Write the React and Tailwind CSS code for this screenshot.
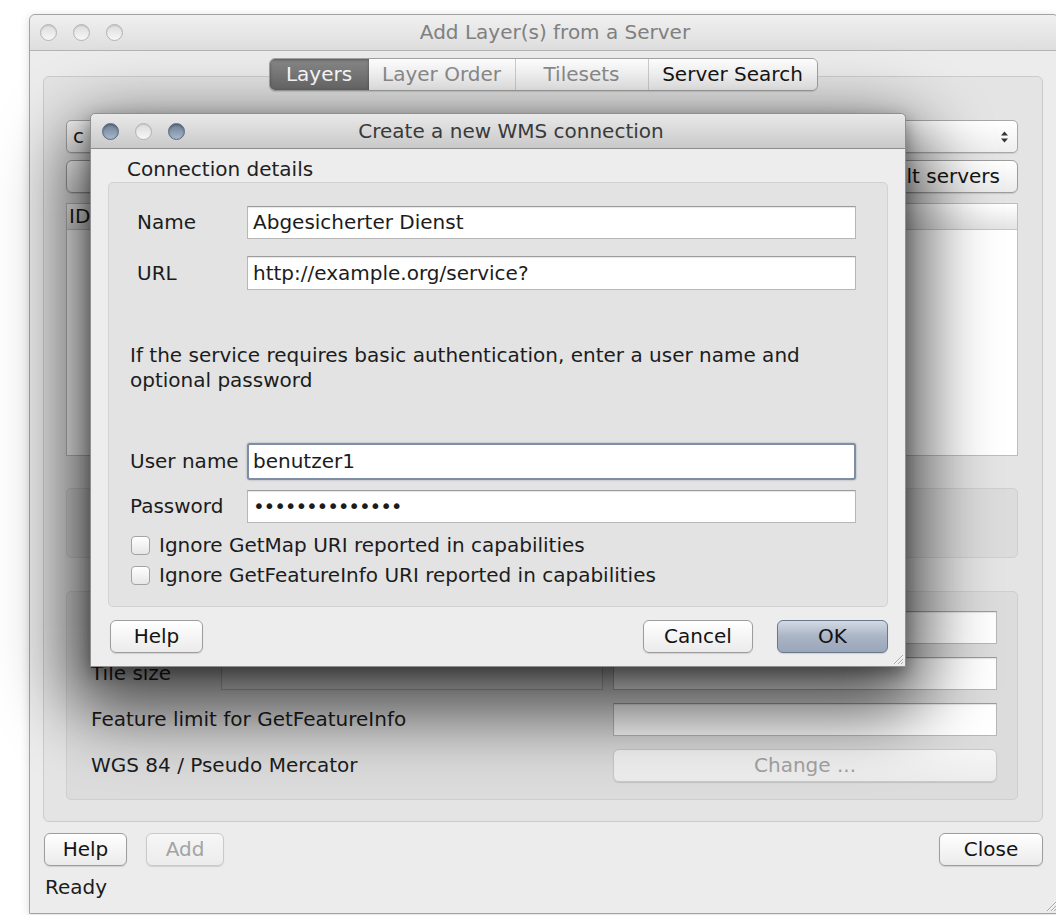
import React from "react";

const FONT = "font-['DejaVu_Sans','Liberation_Sans',sans-serif]";

function Light({ graphite }) {
  return graphite ? (
    <span className="w-[17px] h-[17px] rounded-full border border-[#5a6a80] bg-linear-to-b from-[#6d7f96] to-[#a9b8ca] shadow-[inset_0_1px_2px_rgba(0,0,0,0.35)]" />
  ) : (
    <span className="w-[17px] h-[17px] rounded-full border border-[#b4b4b4] bg-linear-to-b from-[#dcdcdc] to-[#f7f7f7] shadow-[inset_0_1px_1px_rgba(0,0,0,0.12)]" />
  );
}

function Grip() {
  return (
    <svg width="13" height="13" viewBox="0 0 13 13" className="absolute right-[1px] bottom-[1px]">
      <path d="M12 3 L3 12 M12 7 L7 12 M12 10 L10 12" stroke="#a6a6a6" strokeWidth="1" />
      <path d="M12 4 L4 12 M12 8 L8 12" stroke="#fbfbfb" strokeWidth="1" />
    </svg>
  );
}

function Button({ children, className = "", kind = "normal" }) {
  const look =
    kind === "primary"
      ? "border-[#6b788c] bg-linear-to-b from-[#d3dae4] via-[#a9b4c5] to-[#9aa7ba] text-[#111]"
      : kind === "disabled"
      ? "border-[#c9c9c9] bg-linear-to-b from-[#f6f6f6] to-[#ececec] text-[#a3a3a3]"
      : "border-[#9d9d9d] bg-linear-to-b from-white to-[#ebebeb] text-[#141414]";
  return (
    <div
      className={`h-[33px] shrink-0 rounded-[6px] border flex items-center justify-center shadow-[0_1px_1px_rgba(0,0,0,0.12)] ${look} ${className}`}
    >
      {children}
    </div>
  );
}

function Field({ children, className = "", disabled }) {
  return (
    <div
      className={`h-[33px] border border-[#b7b7b7] border-t-[#9c9c9c] flex items-center px-[5px] shadow-[inset_0_1px_1px_rgba(0,0,0,0.1)] ${
        disabled ? "bg-[#e2e2e2]" : "bg-white"
      } ${className}`}
    >
      {children}
    </div>
  );
}

function CheckRow({ label, className = "" }) {
  return (
    <div className={`flex items-center gap-[9px] pl-[22px] h-[23px] ${className}`}>
      <span className="w-[19px] h-[19px] rounded-[4px] border border-[#a3a3a3] bg-linear-to-b from-white to-[#e6e6e6]" />
      <span>{label}</span>
    </div>
  );
}

const tabs = [
  { label: "Layers", w: "w-[99px]", on: true },
  { label: "Layer Order", w: "w-[146px]" },
  { label: "Tilesets", w: "w-[133px]" },
  { label: "Server Search", w: "w-[169px]", dark: true },
];

function MainWindow() {
  return (
    <div className="absolute left-[29px] top-[14px] w-[1030px] h-[900px] rounded-t-[6px] border border-[#a3a3a3] bg-[#ececec] flex flex-col shadow-[0_2px_10px_rgba(0,0,0,0.15)]">
      {/* title bar */}
      <div className="relative h-[36px] shrink-0 flex items-center gap-[16px] pl-[10px] rounded-t-[6px] border-b border-[#b3b3b3] bg-linear-to-b from-[#f0f0f0] to-[#dedede]">
        <Light />
        <Light />
        <Light />
        <div className="absolute inset-0 flex items-center justify-center pl-[22px] text-[#808080]">
          Add Layer(s) from a Server
        </div>
      </div>

      <div className="flex-1 flex flex-col pl-[13px] pr-[15px]">
        {/* tab switcher */}
        <div className="mt-[7px] flex justify-center relative">
          <div className="h-[33px] flex rounded-[6px] border border-[#a2a2a2] overflow-hidden shadow-[0_1px_1px_rgba(0,0,0,0.12)]">
            {tabs.map((t, i) => (
              <div
                key={t.label}
                className={`${t.w} flex items-center justify-center ${
                  i > 0 && !tabs[i - 1].on ? "border-l border-[#cdcdcd]" : ""
                } ${
                  t.on
                    ? "bg-linear-to-b from-[#888888] to-[#6c6c6c] text-white shadow-[inset_0_1px_3px_rgba(0,0,0,0.35)]"
                    : "bg-linear-to-b from-white to-[#eeeeee] " + (t.dark ? "text-[#151515]" : "text-[#8c8c8c]")
                }`}
              >
                {t.label}
              </div>
            ))}
          </div>
        </div>

        {/* tab page */}
        <div className="-mt-[15px] h-[746px] shrink-0 rounded-[6px] border border-[#cbcbcb] bg-[#e4e4e4] pt-[43px] pl-[22px] pr-[24px] flex flex-col">
          <div className="h-[33px] rounded-[5px] border border-[#a8a8a8] bg-linear-to-b from-white to-[#efefef] flex items-center pl-[6px] pr-[8px] shadow-[0_1px_1px_rgba(0,0,0,0.1)]">
            <span className="flex-1">c</span>
            <svg width="9" height="14" viewBox="0 0 9 14">
              <path d="M1 5.5 L4.5 1.5 L8 5.5 Z M1 8.5 L4.5 12.5 L8 8.5 Z" fill="#333" />
            </svg>
          </div>

          {/* server buttons; only the last one shows beside the dialog */}
          <div className="mt-[7px] flex gap-[6px]">
            <Button className="w-[120px] h-[32px]" />
            <Button className="w-[80px] h-[32px]" />
            <Button className="w-[80px] h-[32px]" />
            <Button className="ml-auto w-[232px] h-[32px] justify-end pr-[17px]">Add default servers</Button>
          </div>

          <div className="mt-[10px] h-[253px] border border-[#bdbdbd] bg-white flex flex-col">
            <div className="h-[26px] flex items-center border-b border-[#c6c6c6] bg-linear-to-b from-white to-[#e3e3e3]">
              <span className="pl-[2px]">ID</span>
            </div>
          </div>

          <div className="mt-[32px] h-[70px] rounded-[5px] border border-[#cfcfcf] bg-[#dcdcdc]" />

          <div className="mt-[33px] h-[209px] rounded-[5px] border border-[#cfcfcf] bg-[#dcdcdc] pt-[19px] pl-[24px] pr-[20px] flex flex-col gap-[13px]">
            <div className="h-[33px] flex items-center">
              <Field className="ml-auto w-[384px]" />
            </div>
            <div className="h-[33px] flex items-center">
              <span className="w-[130px]">Tile size</span>
              <Field disabled className="w-[382px]" />
              <Field className="ml-auto w-[384px]" />
            </div>
            <div className="h-[33px] flex items-center">
              <span className="flex-1">Feature limit for GetFeatureInfo</span>
              <Field className="w-[384px]" />
            </div>
            <div className="h-[33px] flex items-center">
              <span className="flex-1">WGS 84 / Pseudo Mercator</span>
              <Button kind="disabled" className="w-[384px] h-[32px] rounded-[5px]">
                Change ...
              </Button>
            </div>
          </div>
        </div>

        <div className="mt-[11px] flex items-center">
          <Button className="ml-[1px] w-[83px]">Help</Button>
          <Button kind="disabled" className="ml-[19px] w-[78px]">
            Add
          </Button>
          <Button className="ml-auto w-[104px]">Close</Button>
        </div>
        <div className="mt-[10px] pl-[2px] leading-[23px]">Ready</div>
      </div>
      <Grip />
    </div>
  );
}

function ConnectionDialog() {
  return (
    <>
      {/* soft drop shadow under the sheet */}
      <div className="absolute left-[68px] top-[124px] w-[858px] h-[590px] rounded-[40px] bg-black/65 blur-[34px]" />
      <div className="absolute left-[90px] top-[113px] w-[816px] h-[554px] rounded-t-[5px] border border-[#8f8f8f] bg-[#ededed] flex flex-col shadow-[0_6px_16px_rgba(0,0,0,0.35)]">
        <div className="relative h-[35px] shrink-0 flex items-center gap-[16px] pl-[11px] rounded-t-[5px] border-b border-[#8d8d8d] bg-linear-to-b from-[#e9e9e9] to-[#c9c9c9]">
          <Light graphite />
          <Light />
          <Light graphite />
          <div className="absolute inset-0 flex items-center justify-center pl-[26px] text-[#3a3a3a]">
            Create a new WMS connection
          </div>
        </div>

        <div className="flex-1 flex flex-col pt-[9px] px-[17px]">
          <div className="pl-[19px] leading-[23px] text-[#202020]">Connection details</div>
          <div className="mt-[1px] h-[425px] rounded-[5px] border border-[#d2d2d2] bg-[#e3e3e3] pt-[23px] flex flex-col">
            <div className="flex items-center pl-[28px]">
              <span className="w-[110px]">Name</span>
              <Field className="w-[609px]">Abgesicherter Dienst</Field>
            </div>
            <div className="mt-[17px] flex items-center pl-[28px]">
              <span className="w-[110px]">URL</span>
              <Field className="w-[609px] h-[34px]">http://example.org/service?</Field>
            </div>

            <p className="mt-[53px] pl-[21px] max-w-[720px] leading-[25px]">
              If the service requires basic authentication, enter a user name and optional password
            </p>

            <div className="mt-[50px] flex items-center pl-[21px]">
              <span className="w-[117px]">User name</span>
              <div className="w-[609px] h-[37px] rounded-[3px] border-2 border-[#7f8ea4] bg-white flex items-center px-[4px] shadow-[0_0_2px_rgba(90,110,140,0.6)]">
                benutzer1
              </div>
            </div>
            <div className="mt-[10px] flex items-center pl-[21px]">
              <span className="w-[117px]">Password</span>
              <Field className="w-[609px]">
                <span className="tracking-[-1.2px]">••••••••••••••</span>
              </Field>
            </div>

            <CheckRow className="mt-[11px]" label="Ignore GetMap URI reported in capabilities" />
            <CheckRow className="mt-[7px]" label="Ignore GetFeatureInfo URI reported in capabilities" />
          </div>

          <div className="mt-[13px] flex items-center pl-[2px]">
            <Button className="w-[93px]">Help</Button>
            <Button className="ml-auto w-[110px]">Cancel</Button>
            <Button kind="primary" className="ml-[24px] w-[111px]">
              OK
            </Button>
          </div>
        </div>
        <Grip />
      </div>
    </>
  );
}

export default function App() {
  return (
    <div className={`relative w-[1056px] h-[915px] overflow-hidden bg-white text-[20px] leading-[23px] text-[#1c1c1c] ${FONT}`}>
      <MainWindow />
      <ConnectionDialog />
    </div>
  );
}
